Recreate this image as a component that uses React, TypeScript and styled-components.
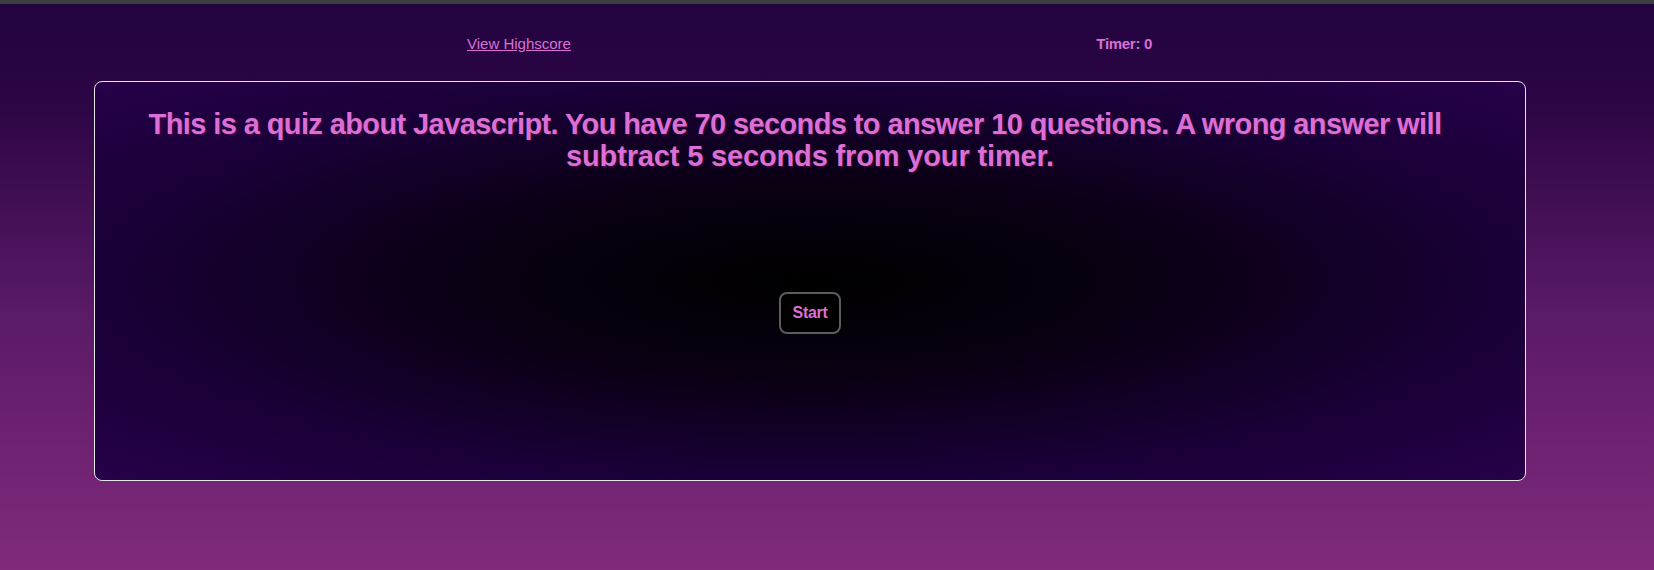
import React from "react";
import styled, { createGlobalStyle } from "styled-components";

const Global = createGlobalStyle`
  html, body {
    margin: 0;
    padding: 0;
  }
  body {
    min-height: 570px;
    border-top: 4px solid #3d3d3d;
    box-sizing: border-box;
    background: linear-gradient(180deg, #22033f 0%, #2c0545 18%, #5a1a66 55%, #812a7c 100%);
    font-family: "Liberation Sans", Arial, sans-serif;
  }
`;

const Page = styled.div`
  min-height: 566px;
  padding-top: 31px;
  box-sizing: border-box;
`;

const Header = styled.header`
  display: flex;
  justify-content: space-between;
  align-items: baseline;
  margin: 0 502px 0 467px;
  line-height: 17px;
`;

const HighscoreLink = styled.a`
  font-size: 15px;
  color: #da70d6;
  text-decoration: underline;
  cursor: pointer;
`;

const Timer = styled.span`
  font-size: 15px;
  font-weight: bold;
  letter-spacing: -0.3px;
  color: #da70d6;
`;

const Card = styled.main`
  margin: 29px 0 0 94px;
  width: 1432px;
  height: 400px;
  box-sizing: border-box;
  border: 1px solid #e6e6e6;
  border-radius: 8px;
  background: radial-gradient(ellipse at center, #000000 0%, #0a0014 35%, #1a0038 70%, #270049 100%);
  display: flex;
  flex-direction: column;
  align-items: center;
  padding: 26px 20px 0;
`;

const Title = styled.h1`
  margin: 0;
  font-size: 29px;
  line-height: 32px;
  font-weight: bold;
  white-space: nowrap;
  color: #da70d6;
  text-align: center;
  text-shadow: 1px 1px 0 rgba(120, 10, 80, 0.6);
`;

const TitleLine = styled.span<{ $spacing: number; $shift: number }>`
  display: block;
  letter-spacing: ${(p) => p.$spacing}px;
  padding-right: ${(p) => p.$shift}px;
`;

const StartButton = styled.button`
  margin-top: 120px;
  width: 62px;
  height: 42px;
  background: #000;
  border: 2px solid #5c5c5c;
  border-radius: 8px;
  color: #da70d6;
  font-family: "Liberation Sans", Arial, sans-serif;
  font-size: 16px;
  font-weight: bold;
  letter-spacing: -0.3px;
  cursor: pointer;
  padding: 0;
`;

export default function App() {
  return (
    <>
      <Global />
      <Page>
        <Header>
          <HighscoreLink>View Highscore</HighscoreLink>
          <Timer>Timer: 0</Timer>
        </Header>
        <Card>
          <Title>
            <TitleLine $spacing={-0.6} $shift={30}>
              This is a quiz about Javascript. You have 70 seconds to answer 10 questions. A wrong answer will
            </TitleLine>
            <TitleLine $spacing={-0.15} $shift={0}>
              subtract 5 seconds from your timer.
            </TitleLine>
          </Title>
          <StartButton>Start</StartButton>
        </Card>
      </Page>
    </>
  );
}
